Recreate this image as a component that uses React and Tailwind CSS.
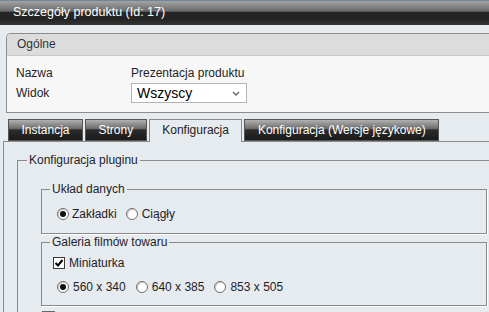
import React from "react";

function Radio({ checked }) {
  return (
    <span className="w-[12px] h-[12px] rounded-full border border-[#6e6e6e] bg-white flex items-center justify-center shrink-0 shadow-[inset_1px_1px_1px_rgba(0,0,0,0.2)]">
      {checked && <span className="w-[6px] h-[6px] rounded-full bg-[#111]" />}
    </span>
  );
}

function Checkbox() {
  return (
    <span className="w-[12px] h-[12px] border border-[#3a3a3a] bg-white flex items-center justify-center shrink-0">
      <svg width="10" height="10" viewBox="0 0 10 10">
        <path d="M1.5 5 L4 7.5 L8.5 2" stroke="#000" strokeWidth="2" fill="none" />
      </svg>
    </span>
  );
}

const inactiveTab =
  "h-[22px] px-[12.5px] border border-[#555] leading-[20px] whitespace-nowrap text-white bg-[linear-gradient(to_bottom,#b0b0b0_0%,#6e6e6e_42%,#2c2c2c_50%,#1a1a1a_100%)]";
const activeTab =
  "h-[23px] px-[12.5px] border border-b-0 border-[#8a8a8a] leading-[20px] whitespace-nowrap text-[#222] bg-[#e6ebf0]";

export default function App() {
  return (
    <div
      className="w-[489px] h-[312px] overflow-hidden bg-[#e6ebf0] text-[12px] text-[#1e1e28]"
      style={{ fontFamily: '"Liberation Sans", Arial, sans-serif' }}
    >
      <div className="w-[530px]">
        <div className="h-[25px] border-t border-[#71859a] bg-[linear-gradient(to_bottom,#a3a3a3_0%,#6a6a6a_42%,#262626_48%,#232323_75%,#363636_100%)] pl-[13px] text-white text-[12.5px] leading-[23px]">
          Szczegóły produktu (Id: 17)
        </div>

        <div className="mt-[8px] ml-[6px] border border-r-0 border-[#8c8c8c] rounded-tl-[5px] bg-[#f7f7f7] overflow-hidden">
          <div className="h-[22px] bg-[#dcdcdc] border-b border-[#c9c9c9] pl-[10px] leading-[21px] text-[#333]">
            Ogólne
          </div>
          <div className="grid grid-cols-[115px_1fr] pl-[9px] pt-[8px] pb-[9px]">
            <div className="h-[19px] leading-[19px]">Nazwa</div>
            <div className="h-[19px] leading-[19px]">Prezentacja produktu</div>
            <div className="h-[20px] leading-[20px]">Widok</div>
            <div>
              <div className="w-[116px] h-[20px] border border-[#b4b4b4] bg-white flex items-center justify-between pl-[5px] pr-[6px] text-[14px] text-black">
                <span className="leading-[18px]">Wszyscy</span>
                <svg width="8" height="5" viewBox="0 0 8 5">
                  <path d="M1 1 L4 4 L7 1" stroke="#666" strokeWidth="1.4" fill="none" />
                </svg>
              </div>
            </div>
          </div>
        </div>

        <div className="flex items-start gap-[2px] pl-[8px] mt-[6px] relative z-10 h-[23px]">
          <div className={inactiveTab}>Instancja</div>
          <div className={inactiveTab}>Strony</div>
          <div className={activeTab}>Konfiguracja</div>
          <div className={inactiveTab}>Konfiguracja (Wersje językowe)</div>
        </div>

        <div className="ml-[3px] -mt-[1px] border-t border-l border-[#8a8a8a] pt-[11px] h-[200px]">
          <fieldset className="ml-[13px] w-[495px] border border-[#8a8a8a] shadow-[1px_1px_0_#fff] pl-[9px]">
            <legend className="px-[2px] leading-[14px]">Konfiguracja pluginu</legend>
            <div className="pl-[14px] pt-[15px]">
              <fieldset className="w-[446px] border border-[#8a8a8a] shadow-[1px_1px_0_#fff] pl-[8px] pb-[11px]">
                <legend className="px-[2px] leading-[14px]">Układ danych</legend>
                <div className="flex items-center h-[16px] mt-[10px] pl-[7px]">
                  <Radio checked />
                  <span className="ml-[3px]">Zakładki</span>
                  <span className="ml-[9px]"><Radio /></span>
                  <span className="ml-[4px]">Ciągły</span>
                </div>
              </fieldset>

              <fieldset className="mt-[1px] w-[446px] border border-[#8a8a8a] shadow-[1px_1px_0_#fff] pl-[8px] pb-[10px]">
                <legend className="px-[2px] leading-[14px]">Galeria filmów towaru</legend>
                <div className="flex items-center h-[16px] mt-[6px] pl-[3px]">
                  <Checkbox />
                  <span className="ml-[4px]">Miniaturka</span>
                </div>
                <div className="flex items-center h-[16px] mt-[8px] pl-[7px]">
                  <Radio checked />
                  <span className="ml-[4px]">560 x 340</span>
                  <span className="ml-[10px]"><Radio /></span>
                  <span className="ml-[4px]">640 x 385</span>
                  <span className="ml-[10px]"><Radio /></span>
                  <span className="ml-[4px]">853 x 505</span>
                </div>
              </fieldset>

              <div className="mt-[5px] ml-[1px]">
                <span className="block w-[13px] h-[13px] border border-[#666] bg-white" />
              </div>
            </div>
          </fieldset>
        </div>
      </div>
    </div>
  );
}
